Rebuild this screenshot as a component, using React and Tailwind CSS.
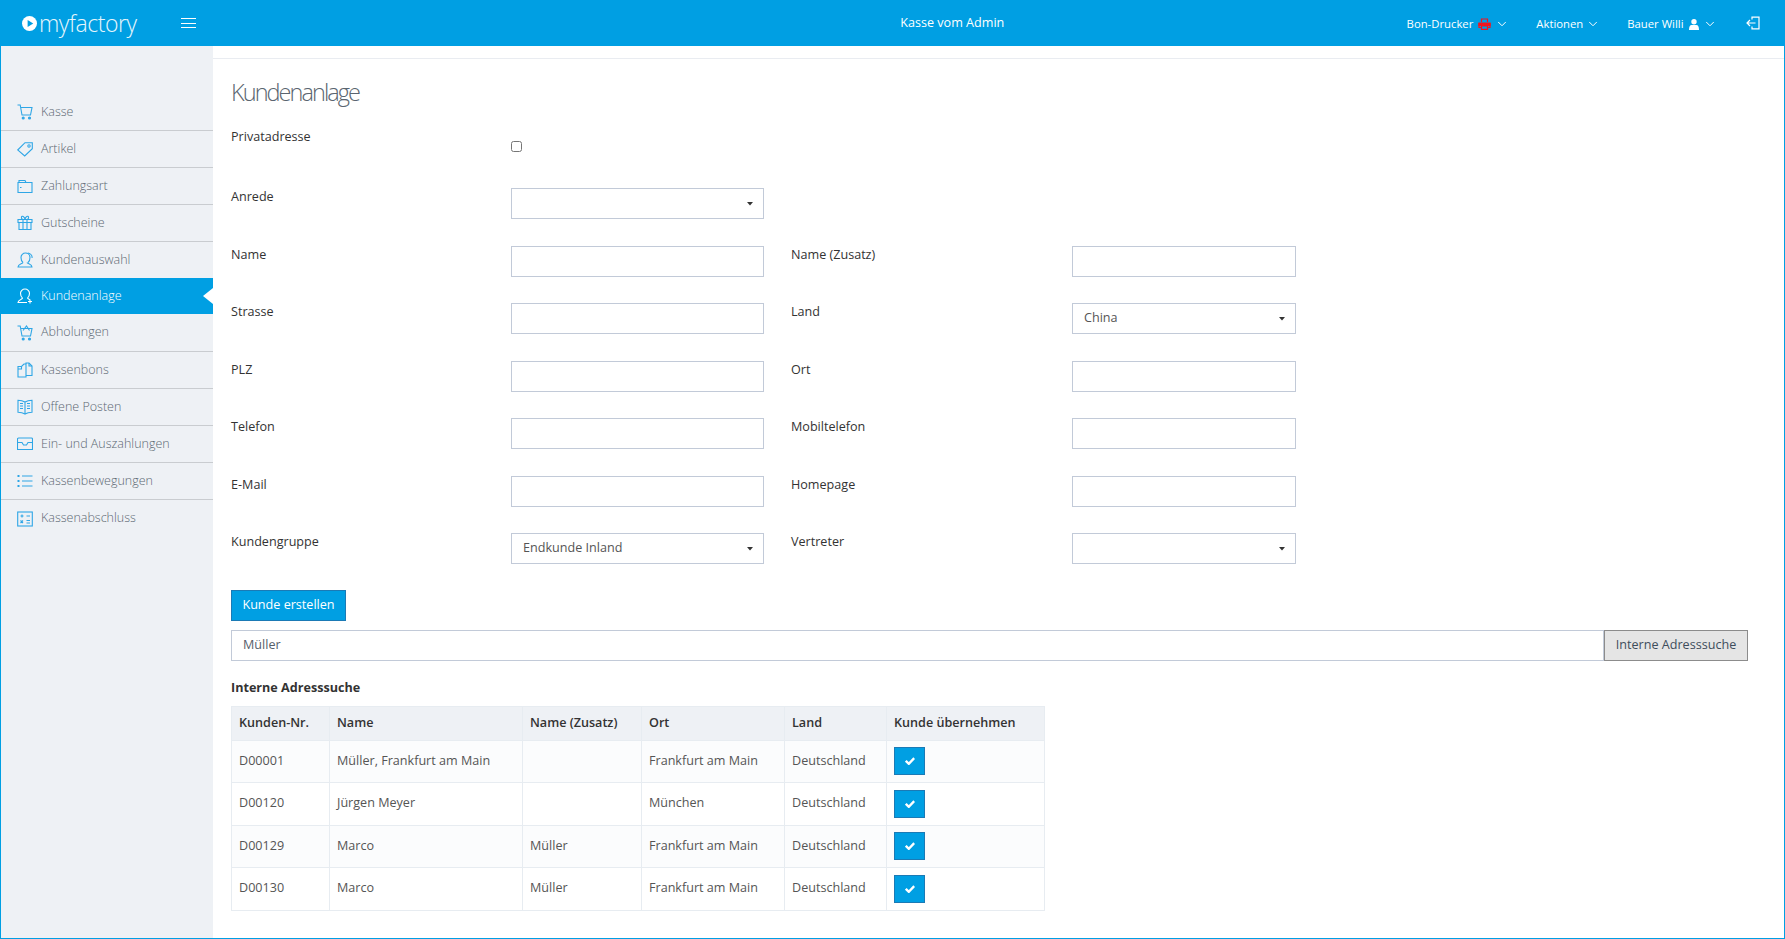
import React from 'react';
import { ChevronDown } from 'lucide-react';

const font = { fontFamily: '"Open Sans", sans-serif' };

// sidebar icons, stroke only, 16x16 box
const icons = {
  cart: <><path d="M.5 1h2.700l1.800 10h8.500l1.500-7.500H3.600" /><circle cx="6.200" cy="14" r="1" fill="currentColor" /><circle cx="12.500" cy="14" r="1" fill="currentColor" /></>,
  tag: <><path d="M.7 9L8 1.700h7.300v6L7.700 15z" /><circle cx="12" cy="5" r="1.200" /></>,
  wallet: <><path d="M1 4.500h1V2.500h6l1 2h6v10H1z" /><path d="M2 4.500h7M3 9.500h1.500" /></>,
  gift: <><path d="M2 7.500v7h12v-7M1 4.500h14v3H1zM6 4.500v10M10 4.500v10" /><path d="M8 4.500C5 4.500 4 3.500 4.500 2S7.500 1.500 8 4.500C8.500 1.500 11 .5 11.500 2s-.5 2.500-3.500 2.500z" /></>,
  users: <><path d="M6 10.500C4.500 9.500 4 7.500 4 5.500 4 3 6 1 8.500 1S13 3 13 5.500c0 2-.5 4-2 5" /><path d="M6 10.500C5.500 12 1 12 1 15h14c0-3-4.500-3-5-4.500" /><path d="M11 1c2.500.5 4.500 2.500 4 5" /></>,
  userAdd: <><path d="M5.500 10C4 9 3.500 7 3.500 5.200 3.500 3 5.500 1 8 1s4.500 2 4.500 4.200c0 1.800-.5 3.800-2 4.800" /><path d="M5.500 10c0 1.500-4.500 1.500-4.500 4.500h9M10.500 10c.3.800 1.500 1.200 2.500 1.700" /><path d="M13 11.500v4M11 13.500h4" /></>,
  basket: <><path d="M.5 1h2.700l1.800 10h8.500l1.500-7.500H4" /><path d="M6 5.500L9.500 1l3 4.500" /><circle cx="6.200" cy="14" r="1" fill="currentColor" /><circle cx="12.500" cy="14" r="1" fill="currentColor" /></>,
  copy: <><path d="M1 4.500h3.500L7 2h2v13H1z" /><path d="M4.500 4.500V7H1M9 2V1h3l3 3v9.500H9" /><path d="M12 1v3h3" /></>,
  book: <><path d="M8 3C6 1.800 3.500 1.300 1 1.300v12c2.500 0 5 .5 7 1.700 2-1.200 4.500-1.700 7-1.700v-12C12.500 1.300 10 1.800 8 3zM8 3v12" /><path d="M3 4.500h3M3 7h3M3 9.500h3M10 4.500h3M10 7h3M10 9.500h3" /></>,
  inbox: <><path d="M1.500 2h13a1 1 0 0 1 1 1v10.500H.5V3a1 1 0 0 1 1-1z" /><path d="M.5 6.500h4.500l1.500 2.500h3L11 6.500h4.500" /></>,
  list: <><path d="M5 3h10.500M5 8h10.500M5 13h10.500" /><path d="M.5 3h2M.5 8h2M.5 13h2" strokeWidth="2" /></>,
  calc: <><rect x=".7" y="1" width="14.600" height="14" /><path d="M3.500 5h3M5 3.500v3M9.500 5h3.500M9.500 9.500h3.500M9.500 12h3.500M3.500 9.500l2.500 2.500M6 9.500L3.500 12" /></>,
};

const menu = [
  ['Kasse', 'cart', 'h-[37px]'],
  ['Artikel', 'tag', 'h-[37px]'],
  ['Zahlungsart', 'wallet', 'h-[37px]'],
  ['Gutscheine', 'gift', 'h-[37px]'],
  ['Kundenauswahl', 'users', 'h-[36px]'],
  ['Kundenanlage', 'userAdd', 'h-[36px]', true],
  ['Abholungen', 'basket', 'h-[38px]'],
  ['Kassenbons', 'copy', 'h-[37px]'],
  ['Offene Posten', 'book', 'h-[37px]'],
  ['Ein- und Auszahlungen', 'inbox', 'h-[37px]'],
  ['Kassenbewegungen', 'list', 'h-[37px]'],
  ['Kassenabschluss', 'calc', 'h-[37px]'],
];

const rows = [
  ['D00001', 'Müller, Frankfurt am Main', '', 'Frankfurt am Main', 'Deutschland'],
  ['D00120', 'Jürgen Meyer', '', 'München', 'Deutschland'],
  ['D00129', 'Marco', 'Müller', 'Frankfurt am Main', 'Deutschland'],
  ['D00130', 'Marco', 'Müller', 'Frankfurt am Main', 'Deutschland'],
];

const Caret = () => (
  <svg width="6" height="4" viewBox="0 0 6 4" className="shrink-0"><path d="M0 0h6L3 3.500z" fill="#333" /></svg>
);

const Field = ({ label, value, select, wide }) => (
  <>
    <div className={`${wide ? 'w-[280px]' : 'w-[281px]'} text-[12.600px] leading-[18px] text-[#333]`}>{label}</div>
    {select ? (
      <div className={`${wide ? 'w-[253px]' : 'w-[224px]'} h-[31px] border border-[#c2cad8] pl-[11px] pr-[10px] flex items-center justify-between text-[12.600px] text-[#555]`}>
        <span>{value}</span>
        <Caret />
      </div>
    ) : (
      <input className={`${wide ? 'w-[253px]' : 'w-[224px]'} h-[31px] border border-[#c2cad8] px-[11px] text-[12.600px] text-[#555] outline-none`} />
    )}
  </>
);

const Row = ({ children }) => <div className="flex h-[57.500px]">{children}</div>;

const Gap = () => <div className="w-[27px]" />;

export default function App() {
  return (
    <div style={font} className="h-[939px] flex flex-col overflow-hidden border-x border-b border-[#009fe3] bg-white">
      {/* Topbar */}
      <header className="h-[46px] shrink-0 bg-[#009fe3] text-white flex items-center">
        <div className="w-[497px] flex items-center pl-[21px]">
          <svg width="15" height="15" viewBox="0 0 16 16"><circle cx="8" cy="8" r="8" fill="#fff" /><path d="M6 4.200L12 8l-6 3.800z" fill="#009fe3" /></svg>
          <span className="ml-[2px] text-[23px] font-light leading-[30px] tracking-[-0.450px] opacity-90">myfactory</span>
          <div className="ml-[44px] w-[15px] flex flex-col gap-[3.500px]">
            <div className="h-px bg-white" />
            <div className="h-px bg-white" />
            <div className="h-px bg-white" />
          </div>
        </div>
        <div className="flex-1 text-center text-[12.600px]">Kasse vom Admin</div>
        <div className="flex items-center pr-[24px] pt-[2px] text-[11.300px]">
          <span>Bon-Drucker</span>
          <svg width="13" height="12" viewBox="0 0 13 12" className="ml-[5px]" fill="none" stroke="#f0141e" strokeWidth="1.200">
            <path d="M3.500 4V1h6v3M3 9.500H1V5h11v4.500h-2" />
            <path d="M3.500 8h6v3.400h-6z" />
            <path d="M1 5.500h11v2H1z" fill="#f0141e" />
          </svg>
          <ChevronDown size={14} className="ml-[3.500px]" strokeWidth={1.700} />
          <span className="ml-[27.500px]">Aktionen</span>
          <ChevronDown size={14} className="ml-[2.500px]" strokeWidth={1.700} />
          <span className="ml-[27.500px]">Bauer Willi</span>
          <svg width="10" height="11" viewBox="0 0 10 11" className="ml-[5px]" fill="#fff"><circle cx="5" cy="2.800" r="2.700" /><path d="M0 11c0-3.500 1-5 2.500-5h5C9 6 10 7.500 10 11z" /></svg>
          <ChevronDown size={14} className="ml-[4.500px]" strokeWidth={1.700} />
          <svg width="14" height="14" viewBox="0 0 14 14" fill="none" stroke="#fff" strokeWidth="1.200" className="ml-[29px] -mt-[2px]">
            <path d="M6 3.500V1.200h7v11.600H6v-2.300" />
            <path d="M9.500 7H1M4 4L1 7l3 3" />
          </svg>
        </div>
      </header>

      <div className="flex flex-1 min-h-0">
        {/* Sidebar */}
        <aside className="w-[212px] shrink-0 bg-[#eef1f5] pt-[48px]">
          {menu.map(([name, icon, height, active], i) => (
            <div
              key={name}
              className={`relative ${height} pl-[16px] flex items-center text-[12.500px] font-light ${active ? 'bg-[#009fe3] text-white' : `text-[#5c6873] ${i < menu.length - 1 && !menu[i + 1][3] ? 'border-b border-[#c9ccd0]' : ''}`}`}
            >
              <svg width="16" height="16" viewBox="0 0 16 16" fill="none" stroke="currentColor" strokeWidth="1.100" className={`shrink-0 ${active ? 'text-white' : 'text-[#2ea6e6]'}`}>
                {icons[icon]}
              </svg>
              <span className="ml-[8px]">{name}</span>
              {active && <span className="absolute right-0 top-[10px] border-y-[8px] border-r-[10px] border-y-transparent border-r-white" />}
            </div>
          ))}
        </aside>

        {/* Main Content */}
        <main className="flex-1 min-w-0">
          <div className="h-[13px] border-b border-[#e9ecf1]" />
          <div className="pl-[18px] pr-[36px]">
            <h1 className="mt-[17px] text-[23.500px] leading-[33px] font-light text-[#5a6570] tracking-[-1.950px]">Kundenanlage</h1>

            <div className="mt-[19px] flex h-[60px]">
              <div className="w-[280px] text-[12.600px] leading-[18px] text-[#333]">Privatadresse</div>
              <input type="checkbox" className="mt-[13px] w-[11px] h-[11px]" />
            </div>

            <Row><Field wide label="Anrede" select value="" /></Row>
            <Row><Field wide label="Name" /><Gap /><Field label="Name (Zusatz)" /></Row>
            <Row><Field wide label="Strasse" /><Gap /><Field label="Land" select value="China" /></Row>
            <Row><Field wide label="PLZ" /><Gap /><Field label="Ort" /></Row>
            <Row><Field wide label="Telefon" /><Gap /><Field label="Mobiltelefon" /></Row>
            <Row><Field wide label="E-Mail" /><Gap /><Field label="Homepage" /></Row>
            <Row><Field wide label="Kundengruppe" select value="Endkunde Inland" /><Gap /><Field label="Vertreter" select value="" /></Row>

            <button className="block -mt-[1px] h-[31px] w-[115px] pt-[1px] bg-[#009fe3] border border-[#1b7ab5] text-white text-[12.600px]">Kunde erstellen</button>

            <div className="mt-[9px] flex h-[31px]">
              <input defaultValue="Müller" className="flex-1 min-w-0 border border-[#c2cad8] px-[11px] pt-[1px] text-[12.600px] text-[#555e6b] outline-none" />
              <button className="w-[144px] bg-[#e5e5e5] border border-[#8c8c8c] text-[12.600px] text-[#3e4d5c]">Interne Adresssuche</button>
            </div>

            <h2 className="mt-[18px] text-[12.600px] leading-[18px] font-bold text-[#333]">Interne Adresssuche</h2>

            <table className="mt-[9px] w-[814px] table-fixed border-collapse text-[12.600px] text-[#555]">
              <thead>
                <tr className="h-[34px] bg-[#eef1f5] text-left text-[#333]">
                  <th className="w-[98px] px-[7px] font-semibold border border-[#e7ecf1]">Kunden-Nr.</th>
                  <th className="w-[193px] px-[7px] font-semibold border border-[#e7ecf1]">Name</th>
                  <th className="w-[119px] px-[7px] font-semibold border border-[#e7ecf1]">Name (Zusatz)</th>
                  <th className="w-[143px] px-[7px] font-semibold border border-[#e7ecf1]">Ort</th>
                  <th className="w-[102px] px-[7px] font-semibold border border-[#e7ecf1]">Land</th>
                  <th className="px-[7px] font-semibold border border-[#e7ecf1]">Kunde übernehmen</th>
                </tr>
              </thead>
              <tbody>
                {rows.map((r, i) => (
                  <tr key={r[0]} className={`h-[42.500px] ${i % 2 === 0 ? 'bg-[#fbfcfd]' : 'bg-white'}`}>
                    {r.map((c, j) => (
                      <td key={j} className="px-[7px] border border-[#e7ecf1]">{c}</td>
                    ))}
                    <td className="px-[7px] border border-[#e7ecf1]">
                      <button className="w-[31px] h-[28px] pl-[1px] bg-[#009fe3] border border-[#1b7ab5] flex items-center justify-center">
                        <svg width="10" height="8" viewBox="0 0 10 8" fill="none" stroke="#fff" strokeWidth="2.400"><path d="M.8 3.800l3 3L9.200 1.200" /></svg>
                      </button>
                    </td>
                  </tr>
                ))}
              </tbody>
            </table>
          </div>
        </main>
      </div>
    </div>
  );
}
